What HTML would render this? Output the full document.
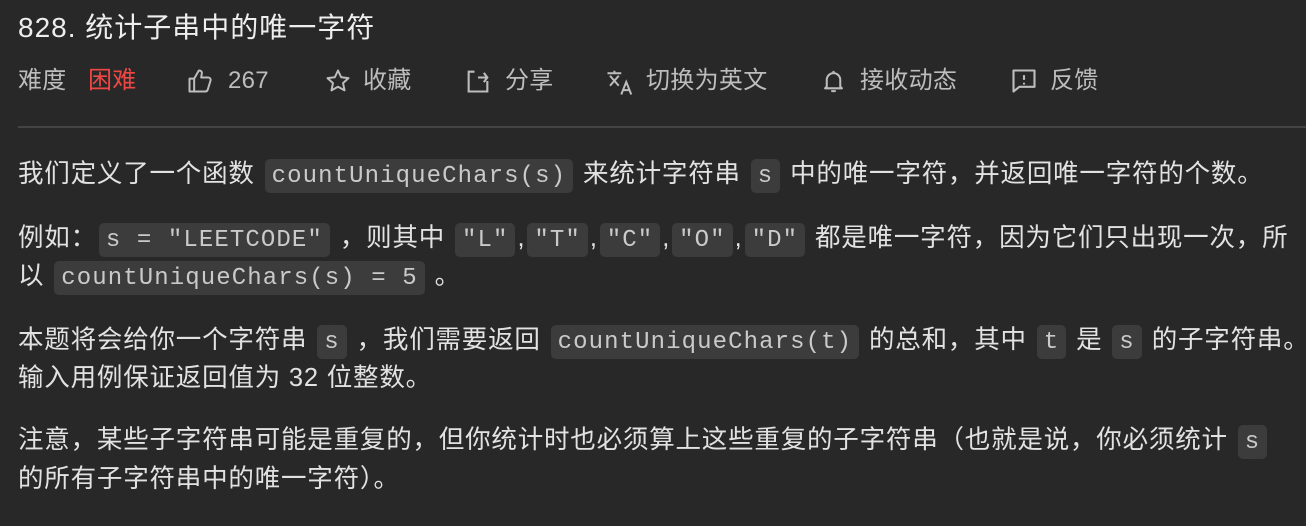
<!DOCTYPE html>
<html><head><meta charset="utf-8"><style>
html,body{margin:0;padding:0;background:#282828;width:1306px;height:526px;overflow:hidden}
body{font-family:"Liberation Sans","Noto Sans CJK SC",sans-serif;color:#e2e2e2;position:relative}
.t{position:absolute;left:18px;top:9px;font-size:28px;line-height:38px;letter-spacing:1px;color:#eee;white-space:nowrap}
.bar{position:absolute;top:62px;left:0;height:38px;width:1306px;font-size:24px;color:#bdbdbd;letter-spacing:0.3px}
.bar span{position:absolute;top:0;line-height:38px}
.bar svg{position:absolute;top:5px}
.red{color:#ef4743}
.hr{position:absolute;left:18px;right:0;top:126px;height:2px;background:#444}
.l{position:absolute;left:18px;white-space:nowrap;font-size:25.5px;letter-spacing:0.8px;line-height:38px}
code{font-family:"Liberation Mono",monospace;font-size:24px;letter-spacing:1.1px;background:#3c3c3c;color:#cacaca;border-radius:5px;padding:4px 7px 3px 7px;margin:0 2px}
</style></head><body>
<div class="t">828. 统计子串中的唯一字符</div>
<div class="bar">
<span style="left:18px">难度</span><span class="red" style="left:88px">困难</span>
<svg style="left:186px" width="28" height="28" viewBox="0 0 24 24" fill="none" stroke="#bdbdbd" stroke-width="1.7" stroke-linejoin="round"><path d="M3 10h4v11H3zM7 10l4-7c2 0 3 1 2.5 3L13 9h6c1.5 0 2.5 1.3 2 2.7l-2.3 7.5c-.3 1-1 1.8-2.2 1.8H7"/></svg>
<span style="left:228px">267</span>
<svg style="left:324px" width="28" height="28" viewBox="0 0 24 24" fill="none" stroke="#bdbdbd" stroke-width="1.7" stroke-linejoin="round"><path d="M12 3l2.7 5.8 6.3.7-4.7 4.3 1.3 6.2L12 16.9 6.4 20l1.3-6.2L3 9.5l6.3-.7z"/></svg>
<span style="left:363px">收藏</span>
<svg style="left:464px" width="28" height="28" viewBox="0 0 24 24" fill="none" stroke="#bdbdbd" stroke-width="1.8"><path d="M9 4H4v17h16v-9M12 9h8M17 5l3 4-3 4"/></svg>
<span style="left:505px">分享</span>
<svg style="left:605px" width="30" height="30" viewBox="0 0 24 24" fill="none" stroke="#bdbdbd" stroke-width="1.6"><path d="M2 5h11M7.5 3v2M4 7l7 8M11 7l-7 8M13 22l4-10 4 10M14.5 18.5h5"/></svg>
<span style="left:646px">切换为英文</span>
<svg style="left:820px" width="27" height="28" viewBox="0 0 24 24" fill="none" stroke="#bdbdbd" stroke-width="1.8" stroke-linejoin="round"><path d="M6 17V11a6 6 0 0112 0v6l1.5 1.5h-15zM10 21h4M12 3v2"/></svg>
<span style="left:860px">接收动态</span>
<svg style="left:1010px" width="28" height="28" viewBox="0 0 24 24" fill="none" stroke="#bdbdbd" stroke-width="1.8" stroke-linejoin="round"><path d="M3 3h18v14H8l-5 4z"/><path d="M12 7v4M12 13.5v1.5"/></svg>
<span style="left:1050px">反馈</span>
</div>
<div class="hr"></div>
<div class="l" style="top:155px">我们定义了一个函数 <code>countUniqueChars(s)</code> 来统计字符串 <code>s</code> 中的唯一字符，并返回唯一字符的个数。</div>
<div class="l" style="top:219px">例如：<code>s = "LEETCODE"</code> ，则其中 <code>"L"</code>,<code>"T"</code>,<code>"C"</code>,<code>"O"</code>,<code>"D"</code> 都是唯一字符，因为它们只出现一次，所</div>
<div class="l" style="top:257px">以 <code>countUniqueChars(s) = 5</code> 。</div>
<div class="l" style="top:321px">本题将会给你一个字符串 <code>s</code> ，我们需要返回 <code>countUniqueChars(t)</code> 的总和，其中 <code>t</code> 是 <code>s</code> 的子字符串。</div>
<div class="l" style="top:359px">输入用例保证返回值为 32 位整数。</div>
<div class="l" style="top:421px">注意，某些子字符串可能是重复的，但你统计时也必须算上这些重复的子字符串（也就是说，你必须统计 <code>s</code></div>
<div class="l" style="top:460px">的所有子字符串中的唯一字符）。</div>
</body></html>
